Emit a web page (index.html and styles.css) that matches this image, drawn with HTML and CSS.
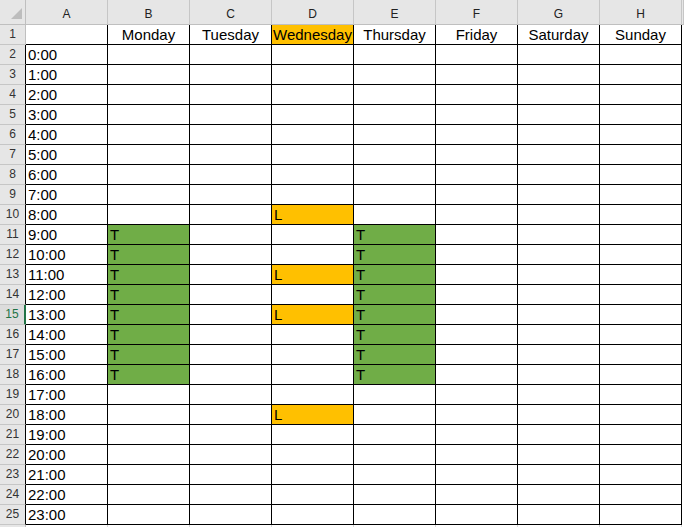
FILE: index.html
```html
<!DOCTYPE html>
<html>
<head>
<meta charset="utf-8">
<link rel="stylesheet" href="styles.css">
</head>
<body>
<div class="sheet">
  <div class="corner"><svg class="tri" width="26" height="24" viewBox="0 0 26 24"><polygon points="11,19 22,19 22,8" fill="#bdbdbd"/></svg></div>
  <div class="ch">A</div><div class="ch">B</div><div class="ch">C</div><div class="ch">D</div><div class="ch">E</div><div class="ch">F</div><div class="ch">G</div><div class="ch">H</div><div class="ch"></div>

  <div class="rh first">1</div><div class="c"></div><div class="c d">Monday</div><div class="c d">Tuesday</div><div class="c d y">Wednesday</div><div class="c d">Thursday</div><div class="c d">Friday</div><div class="c d">Saturday</div><div class="c d">Sunday</div><div class="x"></div>
  <div class="rh">2</div><div class="c">0:00</div><div class="c"></div><div class="c"></div><div class="c"></div><div class="c"></div><div class="c"></div><div class="c"></div><div class="c"></div><div class="x"></div>
  <div class="rh">3</div><div class="c">1:00</div><div class="c"></div><div class="c"></div><div class="c"></div><div class="c"></div><div class="c"></div><div class="c"></div><div class="c"></div><div class="x"></div>
  <div class="rh">4</div><div class="c">2:00</div><div class="c"></div><div class="c"></div><div class="c"></div><div class="c"></div><div class="c"></div><div class="c"></div><div class="c"></div><div class="x"></div>
  <div class="rh">5</div><div class="c">3:00</div><div class="c"></div><div class="c"></div><div class="c"></div><div class="c"></div><div class="c"></div><div class="c"></div><div class="c"></div><div class="x"></div>
  <div class="rh">6</div><div class="c">4:00</div><div class="c"></div><div class="c"></div><div class="c"></div><div class="c"></div><div class="c"></div><div class="c"></div><div class="c"></div><div class="x"></div>
  <div class="rh">7</div><div class="c">5:00</div><div class="c"></div><div class="c"></div><div class="c"></div><div class="c"></div><div class="c"></div><div class="c"></div><div class="c"></div><div class="x"></div>
  <div class="rh">8</div><div class="c">6:00</div><div class="c"></div><div class="c"></div><div class="c"></div><div class="c"></div><div class="c"></div><div class="c"></div><div class="c"></div><div class="x"></div>
  <div class="rh">9</div><div class="c">7:00</div><div class="c"></div><div class="c"></div><div class="c"></div><div class="c"></div><div class="c"></div><div class="c"></div><div class="c"></div><div class="x"></div>
  <div class="rh">10</div><div class="c">8:00</div><div class="c"></div><div class="c"></div><div class="c y">L</div><div class="c"></div><div class="c"></div><div class="c"></div><div class="c"></div><div class="x"></div>
  <div class="rh">11</div><div class="c">9:00</div><div class="c g">T</div><div class="c"></div><div class="c"></div><div class="c g">T</div><div class="c"></div><div class="c"></div><div class="c"></div><div class="x"></div>
  <div class="rh">12</div><div class="c">10:00</div><div class="c g">T</div><div class="c"></div><div class="c"></div><div class="c g">T</div><div class="c"></div><div class="c"></div><div class="c"></div><div class="x"></div>
  <div class="rh">13</div><div class="c">11:00</div><div class="c g">T</div><div class="c"></div><div class="c y">L</div><div class="c g">T</div><div class="c"></div><div class="c"></div><div class="c"></div><div class="x"></div>
  <div class="rh">14</div><div class="c">12:00</div><div class="c g">T</div><div class="c"></div><div class="c"></div><div class="c g">T</div><div class="c"></div><div class="c"></div><div class="c"></div><div class="x"></div>
  <div class="rh act">15</div><div class="c">13:00</div><div class="c g">T</div><div class="c"></div><div class="c y">L</div><div class="c g">T</div><div class="c"></div><div class="c"></div><div class="c"></div><div class="x"></div>
  <div class="rh">16</div><div class="c">14:00</div><div class="c g">T</div><div class="c"></div><div class="c"></div><div class="c g">T</div><div class="c"></div><div class="c"></div><div class="c"></div><div class="x"></div>
  <div class="rh">17</div><div class="c">15:00</div><div class="c g">T</div><div class="c"></div><div class="c"></div><div class="c g">T</div><div class="c"></div><div class="c"></div><div class="c"></div><div class="x"></div>
  <div class="rh">18</div><div class="c">16:00</div><div class="c g">T</div><div class="c"></div><div class="c"></div><div class="c g">T</div><div class="c"></div><div class="c"></div><div class="c"></div><div class="x"></div>
  <div class="rh">19</div><div class="c">17:00</div><div class="c"></div><div class="c"></div><div class="c"></div><div class="c"></div><div class="c"></div><div class="c"></div><div class="c"></div><div class="x"></div>
  <div class="rh">20</div><div class="c">18:00</div><div class="c"></div><div class="c"></div><div class="c y">L</div><div class="c"></div><div class="c"></div><div class="c"></div><div class="c"></div><div class="x"></div>
  <div class="rh">21</div><div class="c">19:00</div><div class="c"></div><div class="c"></div><div class="c"></div><div class="c"></div><div class="c"></div><div class="c"></div><div class="c"></div><div class="x"></div>
  <div class="rh">22</div><div class="c">20:00</div><div class="c"></div><div class="c"></div><div class="c"></div><div class="c"></div><div class="c"></div><div class="c"></div><div class="c"></div><div class="x"></div>
  <div class="rh">23</div><div class="c">21:00</div><div class="c"></div><div class="c"></div><div class="c"></div><div class="c"></div><div class="c"></div><div class="c"></div><div class="c"></div><div class="x"></div>
  <div class="rh">24</div><div class="c">22:00</div><div class="c"></div><div class="c"></div><div class="c"></div><div class="c"></div><div class="c"></div><div class="c"></div><div class="c"></div><div class="x"></div>
  <div class="rh">25</div><div class="c">23:00</div><div class="c"></div><div class="c"></div><div class="c"></div><div class="c"></div><div class="c"></div><div class="c"></div><div class="c"></div><div class="x"></div>
  <div class="rh last"></div><div class="n"></div><div class="n"></div><div class="n"></div><div class="n"></div><div class="n"></div><div class="n"></div><div class="n"></div><div class="n"></div><div class="x"></div>
</div>
</body>
</html>
```

FILE: styles.css
```css
html, body {
  margin: 0;
  padding: 0;
  background: #ffffff;
}
body {
  width: 684px;
  height: 527px;
  overflow: hidden;
}
.sheet {
  display: grid;
  grid-template-columns: 26px repeat(8, 82px) 1fr;
  grid-template-rows: 25px repeat(26, 20px);
  font-family: "Liberation Sans", Arial, sans-serif;
}
.sheet > div {
  box-sizing: border-box;
  overflow: hidden;
  white-space: nowrap;
}
.corner {
  background: #e6e6e6;
  border-right: 1px solid #bfbfbf;
  border-bottom: 1px solid #bfbfbf;
}
.tri {
  display: block;
}
.ch {
  background: #e6e6e6;
  border-right: 1px solid #c6c6c6;
  border-bottom: 1px solid #bfbfbf;
  font-size: 12px;
  color: #222222;
  text-align: center;
  padding-top: 5px;
  line-height: 19px;
}
.rh {
  background: #e6e6e6;
  border-right: 1px solid #000000;
  border-bottom: 1px solid #c6c6c6;
  font-size: 12px;
  color: #333333;
  text-align: center;
  line-height: 19px;
}
.rh.first,
.rh.last {
  border-right-color: #bfbfbf;
}
.rh.act {
  border-right: 2px solid #217346;
  color: #217346;
  background: #dcdcdc;
}
.c {
  border-right: 1px solid #000000;
  border-bottom: 1px solid #000000;
  font-size: 15px;
  line-height: 19px;
  padding-left: 2px;
  color: #000000;
}
.c.d {
  text-align: center;
  padding-left: 0;
}
.y {
  background: #ffc000;
}
.g {
  background: #70ad47;
}
.n {
  border-right: 1px solid #d9d9d9;
}
```
